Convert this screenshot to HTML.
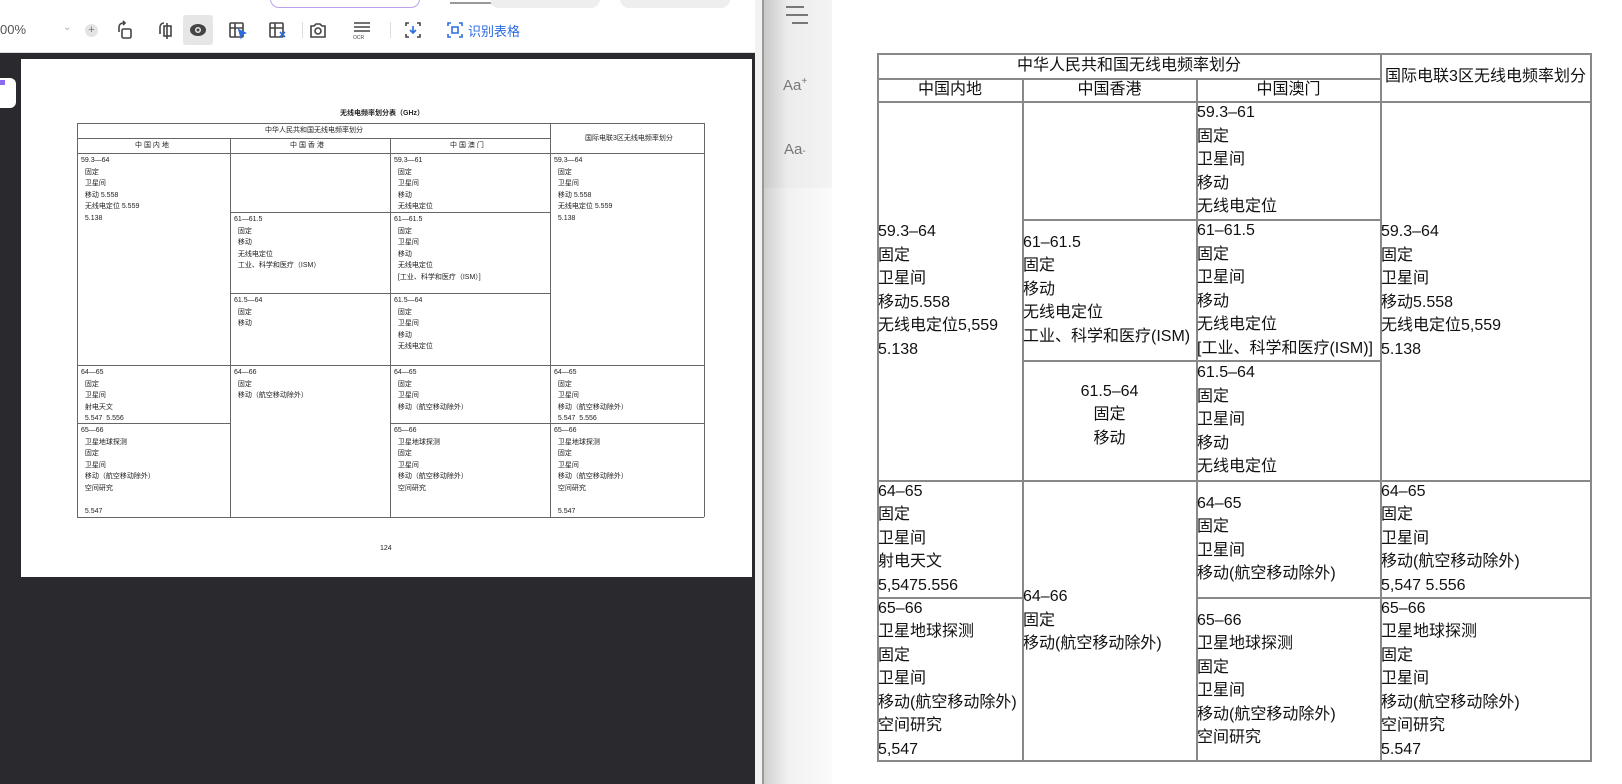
<!DOCTYPE html>
<html><head><meta charset="utf-8"><style>
*{margin:0;padding:0;box-sizing:border-box}
body{width:1622px;height:784px;overflow:hidden;background:#fff;position:relative;font-family:"Liberation Sans","Noto Sans CJK SC",sans-serif}
.abs{position:absolute}
#left{left:0;top:0;width:755px;height:784px;background:#2a2a2e}
#tb{left:0;top:0;width:755px;height:53px;background:#fff;border-bottom:1px solid #ddd}
.ic{position:absolute;top:20px;width:20px;height:20px}
.s{position:absolute;font-size:7px;line-height:11.5px;color:#222;white-space:nowrap}
.st .ln{position:absolute;background:#666}
.rt{position:absolute;font-size:16px;line-height:23.5px;color:#111;white-space:nowrap;display:flex;flex-direction:column;justify-content:center;padding-left:1px}
.rt.c{align-items:center;text-align:center}
.ln{position:absolute;background:#888}
</style></head><body>
<div id="left" class="abs"></div>
<div id="tb" class="abs">
  <div class="abs" style="left:270px;top:-10px;width:150px;height:18px;border:1.5px solid #b9a3f0;border-radius:10px"></div>
  <div class="abs" style="left:450px;top:-8px;width:60px;height:12px;border-bottom:2px solid #999"></div>
  <div class="abs" style="left:490px;top:-10px;width:110px;height:18px;background:#eee;border-radius:10px"></div>
  <div class="abs" style="left:620px;top:-10px;width:110px;height:18px;background:#eee;border-radius:10px"></div>
  <div class="abs" style="left:0;top:22px;font-size:13px;color:#555">00%</div>
  <div class="abs" style="left:63px;top:22px;font-size:10px;color:#aaa">⌄</div>
  <div class="abs" style="left:85px;top:24px;width:13px;height:13px;border-radius:50%;background:#e4e4e4;font-size:11px;line-height:13px;text-align:center;color:#777">+</div>
  <svg class="ic" style="left:115px" viewBox="0 0 20 20" fill="none" stroke="#444" stroke-width="1.6"><path d="M4 12V7a4 4 0 0 1 4-4h2"/><path d="M8 1l2 2-2 2"/><rect x="7" y="9" width="9" height="9" rx="1.5"/></svg>
  <svg class="ic" style="left:157px" viewBox="0 0 20 20" fill="none" stroke="#444" stroke-width="1.6"><path d="M3 14V7a4 4 0 0 1 4-4"/><rect x="7" y="6" width="7" height="10"/><path d="M10 3v16"/></svg>
  <div class="abs" style="left:183px;top:15px;width:30px;height:30px;background:#e6e6e6;border-radius:3px"></div>
  <svg class="ic" style="left:188px" viewBox="0 0 20 20"><ellipse cx="10" cy="10" rx="8" ry="6" fill="#444"/><circle cx="10" cy="10" r="3" fill="#e6e6e6"/><circle cx="10" cy="10" r="1.5" fill="#444"/></svg>
  <svg class="ic" style="left:228px" viewBox="0 0 20 20" fill="none" stroke="#444" stroke-width="1.6"><rect x="2" y="3" width="13" height="14" rx="1"/><path d="M2 8h13M7 3v14"/><path d="M11 10l6 3-3 1-1 3z" fill="#2c6be0" stroke="#2c6be0"/></svg>
  <svg class="ic" style="left:268px" viewBox="0 0 20 20" fill="none" stroke="#444" stroke-width="1.6"><rect x="2" y="3" width="13" height="14" rx="1"/><path d="M2 8h13M7 3v14"/><path d="M12 12l5 5M17 12l-5 5" stroke="#2c6be0"/></svg>
  <div class="abs" style="left:302px;top:22px;width:1px;height:16px;background:#ddd"></div>
  <svg class="ic" style="left:308px" viewBox="0 0 20 20" fill="none" stroke="#444" stroke-width="1.6"><path d="M3 9V6h3l2-2h4l2 2h3v11H3z"/><circle cx="10" cy="11" r="3"/></svg>
  <svg class="ic" style="left:352px" viewBox="0 0 20 20" fill="none" stroke="#444" stroke-width="1.6"><path d="M2 3h16M2 7h16M2 11h16"/><text x="1" y="19" font-size="5" fill="#444" stroke="none">OCR</text></svg>
  <div class="abs" style="left:390px;top:22px;width:1px;height:16px;background:#ddd"></div>
  <svg class="ic" style="left:403px" viewBox="0 0 20 20" fill="none" stroke="#444" stroke-width="1.6"><path d="M3 6V3h3M14 3h3v3M3 14v3h3M17 14v3h-3"/><path d="M10 6v7M7 10l3 3 3-3" stroke="#2c6be0"/></svg>
  <svg class="ic" style="left:445px" viewBox="0 0 20 20" fill="none" stroke="#2c6be0" stroke-width="1.6"><path d="M3 6V3h3M14 3h3v3M3 14v3h3M17 14v3h-3M7 7h6v6H7z"/></svg>
  <div class="abs" style="left:468px;top:21px;font-size:13px;color:#2c6be0">识别表格</div>
</div>
<!-- page -->
<div class="abs" style="left:21px;top:59px;width:731px;height:518px;background:#fff"></div>
<div class="abs" style="left:6px;top:78px;width:10px;height:30px;background:#fff;border-radius:0 6px 6px 0"></div>
<div class="abs" style="left:0;top:78px;width:6px;height:30px;background:#fff"></div>
<div class="abs" style="left:0;top:80px;width:5px;height:5px;background:#8a6cf0"></div>
<div class="s" style="left:340px;top:108px;font-weight:bold">无线电频率划分表（GHz）</div>
<div class="s" style="left:380px;top:543px">124</div>
<div class="st">
<div class="ln" style="left:77px;top:123px;width:627px;height:1px"></div>
<div class="ln" style="left:77px;top:138px;width:473px;height:1px"></div>
<div class="ln" style="left:77px;top:153px;width:627px;height:1px"></div>
<div class="ln" style="left:230px;top:212px;width:320px;height:1px"></div>
<div class="ln" style="left:230px;top:293px;width:320px;height:1px"></div>
<div class="ln" style="left:77px;top:365px;width:627px;height:1px"></div>
<div class="ln" style="left:77px;top:423px;width:153px;height:1px"></div>
<div class="ln" style="left:390px;top:423px;width:314px;height:1px"></div>
<div class="ln" style="left:77px;top:517px;width:627px;height:1px"></div>
<div class="ln" style="left:77px;top:123px;width:1px;height:394px"></div>
<div class="ln" style="left:230px;top:138px;width:1px;height:379px"></div>
<div class="ln" style="left:390px;top:138px;width:1px;height:379px"></div>
<div class="ln" style="left:550px;top:123px;width:1px;height:394px"></div>
<div class="ln" style="left:704px;top:123px;width:1px;height:394px"></div>
</div>
<div class="s" style="left:265px;top:125px">中华人民共和国无线电频率划分</div>
<div class="s" style="left:585px;top:133px">国际电联3区无线电频率划分</div>
<div class="s" style="left:135px;top:140px">中 国 内 地</div>
<div class="s" style="left:290px;top:140px">中 国 香 港</div>
<div class="s" style="left:450px;top:140px">中 国 澳 门</div>
<div class="s" style="left:81px;top:155px">59.3—64<br>&nbsp;&nbsp;固定<br>&nbsp;&nbsp;卫星间<br>&nbsp;&nbsp;移动 5.558<br>&nbsp;&nbsp;无线电定位 5.559<br>&nbsp;&nbsp;5.138</div>
<div class="s" style="left:394px;top:155px">59.3—61<br>&nbsp;&nbsp;固定<br>&nbsp;&nbsp;卫星间<br>&nbsp;&nbsp;移动<br>&nbsp;&nbsp;无线电定位</div>
<div class="s" style="left:554px;top:155px">59.3—64<br>&nbsp;&nbsp;固定<br>&nbsp;&nbsp;卫星间<br>&nbsp;&nbsp;移动 5.558<br>&nbsp;&nbsp;无线电定位 5.559<br>&nbsp;&nbsp;5.138</div>
<div class="s" style="left:234px;top:214px">61—61.5<br>&nbsp;&nbsp;固定<br>&nbsp;&nbsp;移动<br>&nbsp;&nbsp;无线电定位<br>&nbsp;&nbsp;工业、科学和医疗（ISM）</div>
<div class="s" style="left:394px;top:214px">61—61.5<br>&nbsp;&nbsp;固定<br>&nbsp;&nbsp;卫星间<br>&nbsp;&nbsp;移动<br>&nbsp;&nbsp;无线电定位<br>&nbsp;&nbsp;[工业、科学和医疗（ISM）]</div>
<div class="s" style="left:234px;top:295px">61.5—64<br>&nbsp;&nbsp;固定<br>&nbsp;&nbsp;移动</div>
<div class="s" style="left:394px;top:295px">61.5—64<br>&nbsp;&nbsp;固定<br>&nbsp;&nbsp;卫星间<br>&nbsp;&nbsp;移动<br>&nbsp;&nbsp;无线电定位</div>
<div class="s" style="left:81px;top:367px">64—65<br>&nbsp;&nbsp;固定<br>&nbsp;&nbsp;卫星间<br>&nbsp;&nbsp;射电天文<br>&nbsp;&nbsp;5.547 &nbsp;5.556</div>
<div class="s" style="left:234px;top:367px">64—66<br>&nbsp;&nbsp;固定<br>&nbsp;&nbsp;移动（航空移动除外）</div>
<div class="s" style="left:394px;top:367px">64—65<br>&nbsp;&nbsp;固定<br>&nbsp;&nbsp;卫星间<br>&nbsp;&nbsp;移动（航空移动除外）</div>
<div class="s" style="left:554px;top:367px">64—65<br>&nbsp;&nbsp;固定<br>&nbsp;&nbsp;卫星间<br>&nbsp;&nbsp;移动（航空移动除外）<br>&nbsp;&nbsp;5.547 &nbsp;5.556</div>
<div class="s" style="left:81px;top:425px">65—66<br>&nbsp;&nbsp;卫星地球探测<br>&nbsp;&nbsp;固定<br>&nbsp;&nbsp;卫星间<br>&nbsp;&nbsp;移动（航空移动除外）<br>&nbsp;&nbsp;空间研究<br><br>&nbsp;&nbsp;5.547</div>
<div class="s" style="left:394px;top:425px">65—66<br>&nbsp;&nbsp;卫星地球探测<br>&nbsp;&nbsp;固定<br>&nbsp;&nbsp;卫星间<br>&nbsp;&nbsp;移动（航空移动除外）<br>&nbsp;&nbsp;空间研究</div>
<div class="s" style="left:554px;top:425px">65—66<br>&nbsp;&nbsp;卫星地球探测<br>&nbsp;&nbsp;固定<br>&nbsp;&nbsp;卫星间<br>&nbsp;&nbsp;移动（航空移动除外）<br>&nbsp;&nbsp;空间研究<br><br>&nbsp;&nbsp;5.547</div>

<!-- divider & sidebar -->
<div class="abs" style="left:755px;top:0;width:8px;height:784px;background:#f2f2f2"></div>
<div class="abs" style="left:762px;top:0;width:2px;height:784px;background:#9a9a9a"></div>
<div class="abs" style="left:764px;top:0;width:68px;height:784px;background:linear-gradient(90deg,#d0d0d0,#f1f1f1 35%,#fbfbfb)"></div>
<div class="abs" style="left:764px;top:0;width:68px;height:188px;background:linear-gradient(90deg,#c8c8c8,#ececec 35%,#f4f4f4)"></div>
<div class="abs" style="left:786px;top:6px;width:18px;height:2px;background:#777"></div>
<div class="abs" style="left:786px;top:14px;width:22px;height:2px;background:#777"></div>
<div class="abs" style="left:792px;top:22px;width:16px;height:2px;background:#777"></div>
<div class="abs" style="left:783px;top:76px;font-size:15px;color:#777">Aa<sup style="font-size:10px">+</sup></div>
<div class="abs" style="left:784px;top:141px;font-size:15px;color:#777">Aa<span style="font-size:10px">-</span></div>

<!-- right table lines -->
<div class="ln" style="left:877px;top:53px;width:714px;height:1.5px"></div>
<div class="ln" style="left:877px;top:78px;width:503px;height:1.5px"></div>
<div class="ln" style="left:877px;top:101px;width:714px;height:1.5px"></div>
<div class="ln" style="left:1196px;top:219px;width:184px;height:1.5px"></div>
<div class="ln" style="left:1022px;top:219px;width:174px;height:1.5px"></div>
<div class="ln" style="left:1022px;top:360px;width:358px;height:1.5px"></div>
<div class="ln" style="left:877px;top:480px;width:714px;height:1.5px"></div>
<div class="ln" style="left:877px;top:597px;width:145px;height:1.5px"></div>
<div class="ln" style="left:1196px;top:597px;width:395px;height:1.5px"></div>
<div class="ln" style="left:877px;top:760px;width:714px;height:1.5px"></div>
<div class="ln" style="left:877px;top:53px;width:1.5px;height:709px"></div>
<div class="ln" style="left:1022px;top:78px;width:1.5px;height:684px"></div>
<div class="ln" style="left:1196px;top:78px;width:1.5px;height:684px"></div>
<div class="ln" style="left:1380px;top:53px;width:1.5px;height:709px"></div>
<div class="ln" style="left:1590px;top:53px;width:1.5px;height:709px"></div>

<div class="rt c" style="left:877px;top:53px;width:503px;height:25px">中华人民共和国无线电频率划分</div>
<div class="rt c" style="left:1380px;top:53px;width:210px;height:48px">国际电联3区无线电频率划分</div>
<div class="rt c" style="left:877px;top:78px;width:145px;height:23px">中国内地</div>
<div class="rt c" style="left:1022px;top:78px;width:174px;height:23px">中国香港</div>
<div class="rt c" style="left:1196px;top:78px;width:184px;height:23px">中国澳门</div>
<div class="rt" style="left:877px;top:101px;width:145px;height:379px">59.3–64<br>固定<br>卫星间<br>移动5.558<br>无线电定位5,559<br>5.138</div>
<div class="rt" style="left:1196px;top:101px;width:184px;height:118px">59.3–61<br>固定<br>卫星间<br>移动<br>无线电定位</div>
<div class="rt" style="left:1380px;top:101px;width:210px;height:379px">59.3–64<br>固定<br>卫星间<br>移动5.558<br>无线电定位5,559<br>5.138</div>
<div class="rt" style="left:1022px;top:219px;width:174px;height:141px">61–61.5<br>固定<br>移动<br>无线电定位<br>工业、科学和医疗(ISM)</div>
<div class="rt" style="left:1196px;top:219px;width:184px;height:141px">61–61.5<br>固定<br>卫星间<br>移动<br>无线电定位<br>[工业、科学和医疗(ISM)]</div>
<div class="rt c" style="left:1022px;top:360px;width:174px;height:120px;padding-bottom:10px">61.5–64<br>固定<br>移动</div>
<div class="rt" style="left:1196px;top:360px;width:184px;height:120px">61.5–64<br>固定<br>卫星间<br>移动<br>无线电定位</div>
<div class="rt" style="left:877px;top:480px;width:145px;height:117px">64–65<br>固定<br>卫星间<br>射电天文<br>5,5475.556</div>
<div class="rt" style="left:1022px;top:480px;width:174px;height:281px">64–66<br>固定<br>移动(航空移动除外)</div>
<div class="rt" style="left:1196px;top:480px;width:184px;height:117px">64–65<br>固定<br>卫星间<br>移动(航空移动除外)</div>
<div class="rt" style="left:1380px;top:480px;width:210px;height:117px">64–65<br>固定<br>卫星间<br>移动(航空移动除外)<br>5,547 5.556</div>
<div class="rt" style="left:877px;top:597px;width:145px;height:164px">65–66<br>卫星地球探测<br>固定<br>卫星间<br>移动(航空移动除外)<br>空间研究<br>5,547</div>
<div class="rt" style="left:1196px;top:597px;width:184px;height:164px">65–66<br>卫星地球探测<br>固定<br>卫星间<br>移动(航空移动除外)<br>空间研究</div>
<div class="rt" style="left:1380px;top:597px;width:210px;height:164px">65–66<br>卫星地球探测<br>固定<br>卫星间<br>移动(航空移动除外)<br>空间研究<br>5.547</div>
</body></html>
